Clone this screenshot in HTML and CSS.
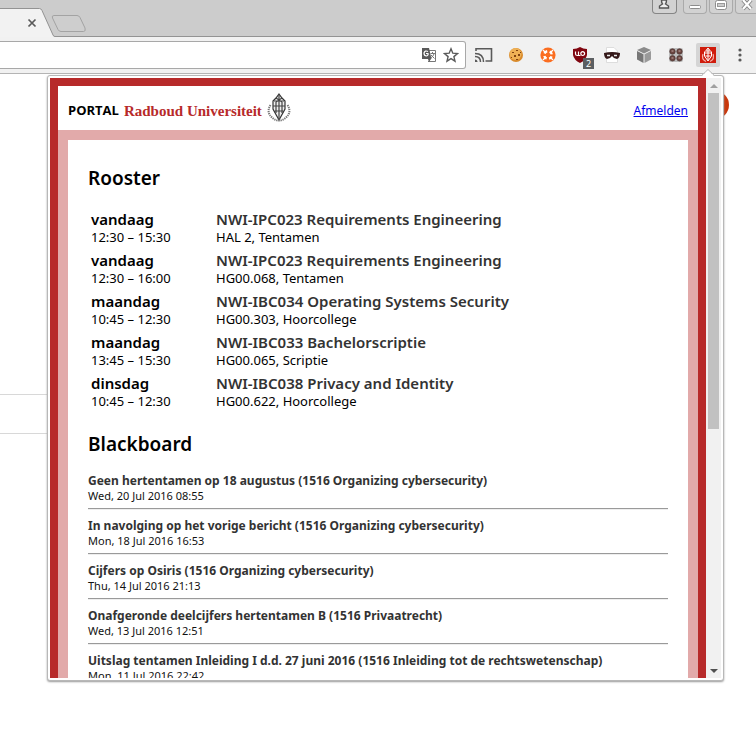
FILE: index.html
```html
<!DOCTYPE html>
<html lang="nl">
<head>
<meta charset="utf-8">
<title>Portal Radboud Universiteit</title>
<link rel="stylesheet" href="styles.css">
</head>
<body>
<header class="browser">
  <div class="tabstrip">
    <svg class="tabs" width="90" height="37" viewBox="0 0 90 37" aria-hidden="true">
      <path d="M0 8.500H39.500Q41 8.500 42 10.500L53 35Q53.500 36.500 55 36.500V37H0Z" fill="#f2f2f2"/>
      <path d="M0 8.500H39.500Q41 8.500 42 10.500L53 35Q53.500 36.500 55 36.500H90" fill="none" stroke="#939393"/>
      <path d="M28.500 19.500L35.500 26.500M35.500 19.500L28.500 26.500" stroke="#5a5a5a" stroke-width="1.700"/>
      <path d="M54 15.500H77Q79 15.500 80 17.500L85 28Q86 31.500 83.500 31.500H61Q59 31.500 58 29.500L52.500 18Q51.500 15.500 54 15.500Z" fill="#cecece" stroke="#a3a3a3"/>
    </svg>
    <div class="window-buttons">
      <button class="win account" aria-label="Account"><svg width="22" height="13" viewBox="0 0 22 13"><path d="M6.500 8V6L9.500 4Q8.500 3 8.500 0H13.500Q13.500 3 12.500 4L15.500 6V8Z" fill="#eee" stroke="#555" stroke-width="1.400"/></svg></button>
      <button class="win" aria-label="Minimaliseren"><svg width="22" height="13" viewBox="0 0 22 13"><rect x="5.500" y="5.500" width="11" height="3" rx="1" fill="#fff" stroke="#8d8d8d"/></svg></button>
      <button class="win" aria-label="Maximaliseren"><svg width="22" height="13" viewBox="0 0 22 13"><rect x="5.500" y="0.500" width="11" height="9" rx="2" fill="#fff" stroke="#8d8d8d"/><rect x="7.500" y="3.500" width="7" height="3" fill="#ccc" stroke="#999"/></svg></button>
      <button class="win" aria-label="Sluiten"><svg width="22" height="13" viewBox="0 0 22 13"><path d="M7 0L15 9M15 0L7 9" stroke="#858585" stroke-width="4"/><path d="M7 0L15 9M15 0L7 9" stroke="#fff" stroke-width="2.200"/></svg></button>
    </div>
  </div>
  <div class="toolbar">
    <div class="address">
      <svg width="16" height="16" viewBox="0 0 16 16" aria-hidden="true"><path d="M7 3.500H14.500V14.500H7" fill="#fff" stroke="#777"/><path d="M1 1H8L10.500 12H1Z" fill="#5a5a5a"/><path d="M7 4.500Q4 3 3 6Q3 9 5.500 9Q7.500 8.500 7 6.500H5" fill="none" stroke="#fff" stroke-width="1.200"/><path d="M9.500 6.500H14M11.500 5V7M13 7Q12 10 9.500 11M10 8L13.500 11.500" fill="none" stroke="#777"/><path d="M7 12H10L8 15Z" fill="#5a5a5a"/></svg>
      <svg width="16" height="16" viewBox="0 0 16 16" aria-hidden="true"><path d="M8 1.800L9.800 6.200L14.500 6.500L10.900 9.600L12 14.200L8 11.700L4 14.200L5.100 9.600L1.500 6.500L6.200 6.200Z" fill="none" stroke="#5a5a5a" stroke-width="1.400"/></svg>
    </div>
    <div class="extensions">
      <button class="ext" aria-label="Casten"><svg width="18" height="16" viewBox="0 0 18 16"><path d="M1 4V1.700H16.500V14H10.500" fill="none" stroke="#5a5a5a" stroke-width="1.600"/><path d="M0 12.500A2.500 2.500 0 0 1 2.500 15H0Z" fill="#5a5a5a"/><path d="M0 9.500Q5.500 9.500 5.500 15M0 6.500Q8.500 6.500 8.500 15" fill="none" stroke="#5a5a5a" stroke-width="1.500"/></svg></button>
      <button class="ext" aria-label="Cookies"><svg width="16" height="16" viewBox="0 0 16 16"><circle cx="8" cy="8" r="7" fill="#d98a2b"/><circle cx="7.500" cy="7" r="6" fill="#eeb055"/><path d="M4 5h2v1H4zM8 3h2v1H8zM10 7h2v2h-2zM6 8h2v2H6zM3 10h1v1H3zM8 12h2v1H8zM12 5h1v1h-1z" fill="#814311"/></svg></button>
      <button class="ext" aria-label="Hulp"><svg width="16" height="16" viewBox="0 0 16 16"><circle cx="8" cy="8" r="7.600" fill="#fb6d20"/><circle cx="8" cy="8" r="3.800" fill="none" stroke="#fff" stroke-width="2.400" stroke-dasharray="3.400 2.570" transform="rotate(20 8 8)"/><path d="M3 3L5 5M13 3L11 5M3 13L5 11M13 13L11 11" stroke="#fff" stroke-width="1.300"/></svg></button>
      <button class="ext" aria-label="uBlock"><svg class="shield" width="16" height="18" viewBox="0 0 16 18"><path d="M1 3Q5 3 8 1Q11 3 15 3V9Q14 14 8 17Q2 14 1 9Z" fill="#800610"/><path d="M3.500 5.500V8Q3.500 9.500 5.500 9.500H6.500V5.500M6.500 9.500H8.500M10.700 5.700A1.900 1.900 0 1 1 10.700 9.500A1.900 1.900 0 1 1 10.700 5.700" fill="none" stroke="#fff" stroke-width="1.200"/></svg><span class="count">2</span></button>
      <button class="ext" aria-label="Masker"><svg width="16" height="16" viewBox="0 0 16 16"><path d="M2.500 0.500H10L13.500 4V15.500H2.500Z" fill="#fff" stroke="#ddd"/><path d="M0 6Q8 4 16 6Q16 11 13 12Q10 12 8 9Q6 12 3 12Q0 11 0 6Z" fill="#35191a"/><path d="M3 8.500H6M10 8.500H13" stroke="#eee" stroke-width="1.600"/></svg></button>
      <button class="ext" aria-label="Kubus"><svg width="16" height="16" viewBox="0 0 16 16"><path d="M8 0L15 3L8 6.500L1 3Z" fill="#8b8b8b"/><path d="M1 4L7.500 7.200V16L1 12.500Z" fill="#777"/><path d="M15 4L8.500 7.200V16L15 12.500Z" fill="#9a9a9a"/></svg></button>
      <button class="ext" aria-label="Knoppen"><svg width="16" height="16" viewBox="0 0 16 16"><rect x="1" y="1" width="14" height="14" rx="2" fill="#bdbdbd"/><g fill="#6b4540" stroke="#4b3532" stroke-width="0.700"><circle cx="4.500" cy="4.500" r="2.700"/><circle cx="11.500" cy="4.500" r="2.700"/><circle cx="4.500" cy="11.300" r="2.700"/><circle cx="11.500" cy="11.300" r="2.700"/></g><path d="M3.500 4h2M10.500 4h2M3.500 11h2M10.500 11h2" stroke="#c5aaa5"/></svg></button>
      <button class="ext active" aria-label="Portal"><svg width="16" height="16" viewBox="0 0 16 16"><rect width="16" height="16" fill="#d01c0c"/><path d="M8 1L10 3.500L11.500 5V9L8 14L4.500 9V5L6 3.500ZM8 2V13M5 6H11M6 4H10M5.500 9H10.500" fill="none" stroke="#fff" stroke-width="1"/><path d="M3 7Q1 12 6 14.500M13 7Q15 12 10 14.500" fill="none" stroke="#f4b1aa" stroke-width="1.200"/></svg></button>
      <button class="ext menu" aria-label="Menu"><svg width="4" height="16" viewBox="0 0 4 16"><g fill="#5a5a5a"><circle cx="2" cy="3" r="1.600"/><circle cx="2" cy="8" r="1.600"/><circle cx="2" cy="13" r="1.600"/></g></svg></button>
    </div>
  </div>
</header>
<div class="page-band"></div>
<div class="page-dot"></div>

<section class="popup">
  <svg class="pointer" width="16" height="8" viewBox="0 0 16 8" aria-hidden="true"><path d="M1 8L8 1L15 8Z" fill="#fff"/><path d="M1 7L8 0.500L15 7" fill="none" stroke="#bbb"/></svg>
  <div class="viewport">
    <div class="portal">
      <div class="brandbar">
        <div class="brand">
          <span class="portal-word">PORTAL</span>
          <span class="university">Radboud Universiteit</span>
          <svg width="24" height="30" viewBox="0 0 24 30" aria-hidden="true"><path d="M12 1L15 5L18 8V16L12 27L6 16V8L9 5Z" fill="#eee" stroke="#333" stroke-width="1.200"/><path d="M12 1V27M7 8H17M6 13H18M8 18H16M9 5L15 9M15 5L9 9M9 9V20M15 9V20" fill="none" stroke="#444" stroke-width="1.200"/><path d="M3.500 12Q-1 19 5 24.500Q8 27.500 12 27.500Q16 27.500 19 24.500Q25 19 20.500 12" fill="none" stroke="#777" stroke-width="2" stroke-dasharray="1.300 0.800"/></svg>
        </div>
        <a class="logout" href="#">Afmelden</a>
      </div>
      <main class="content">
        <h2>Rooster</h2>
        <table class="schedule">
          <tr><td><strong>vandaag</strong>12:30 – 15:30</td><td><a href="#">NWI-IPC023 Requirements Engineering</a>HAL 2, Tentamen</td></tr>
          <tr><td><strong>vandaag</strong>12:30 – 16:00</td><td><a href="#">NWI-IPC023 Requirements Engineering</a>HG00.068, Tentamen</td></tr>
          <tr><td><strong>maandag</strong>10:45 – 12:30</td><td><a href="#">NWI-IBC034 Operating Systems Security</a>HG00.303, Hoorcollege</td></tr>
          <tr><td><strong>maandag</strong>13:45 – 15:30</td><td><a href="#">NWI-IBC033 Bachelorscriptie</a>HG00.065, Scriptie</td></tr>
          <tr><td><strong>dinsdag</strong>10:45 – 12:30</td><td><a href="#">NWI-IBC038 Privacy and Identity</a>HG00.622, Hoorcollege</td></tr>
        </table>
        <h2>Blackboard</h2>
        <ul class="news">
          <li><a href="#">Geen hertentamen op 18 augustus (1516 Organizing cybersecurity)</a><time>Wed, 20 Jul 2016 08:55</time></li>
          <li><a href="#">In navolging op het vorige bericht (1516 Organizing cybersecurity)</a><time>Mon, 18 Jul 2016 16:53</time></li>
          <li><a href="#">Cijfers op Osiris (1516 Organizing cybersecurity)</a><time>Thu, 14 Jul 2016 21:13</time></li>
          <li><a href="#">Onafgeronde deelcijfers hertentamen B (1516 Privaatrecht)</a><time>Wed, 13 Jul 2016 12:51</time></li>
          <li><a href="#">Uitslag tentamen Inleiding I d.d. 27 juni 2016 (1516 Inleiding tot de rechtswetenschap)</a><time>Mon, 11 Jul 2016 22:42</time></li>
        </ul>
      </main>
    </div>
    <div class="scrollbar" aria-hidden="true">
      <span class="arrow up"></span>
      <span class="track"><span class="thumb"></span></span>
      <span class="arrow down"></span>
    </div>
  </div>
</section>
</body>
</html>
```
FILE: styles.css
```css
* { box-sizing: border-box; }

body {
  margin: 0;
  min-height: 100vh;
  position: relative;
  overflow: hidden;
  background: #fff;
  color: #000;
  font-family: "Noto Sans", "Open Sans", sans-serif;
}

button { padding: 0; border: 0; background: none; font: inherit; }
svg { display: block; }

/* Browser chrome */
.tabstrip {
  display: flex;
  justify-content: space-between;
  align-items: flex-start;
  height: 37px;
  background: #ccc;
  border-bottom: 1px solid #939393;
}
.tabs { flex: none; }
.window-buttons { display: flex; gap: 2px; margin-right: -3px; }
.win {
  width: 24px;
  height: 14px;
  border: 1px solid #aaa;
  border-top: 0;
  border-radius: 0 0 4px 4px;
  background: #d2d2d2;
}
.account { width: 25px; margin-right: 4px; border-color: #858585; }
.toolbar {
  display: flex;
  align-items: center;
  height: 37px;
  background: #f1f1f1;
  border-bottom: 1px solid #b4b4b4;
}
.address {
  flex: 1;
  display: flex;
  justify-content: flex-end;
  align-items: center;
  gap: 6px;
  height: 28px;
  padding-right: 6px;
  background: #fff;
  border: 1px solid #a8a8a8;
  border-left: 0;
  border-radius: 0 3px 3px 0;
}
.extensions { display: flex; align-items: center; gap: 8px; padding: 0 4px 0 6px; }
.ext {
  position: relative;
  display: flex;
  justify-content: center;
  align-items: center;
  width: 24px;
  height: 24px;
  border-radius: 2px;
}
.active { background: #d5d5d5; }
.count {
  position: absolute;
  right: -2px;
  bottom: -2px;
  width: 11px;
  height: 11px;
  background: #5c5f62;
  color: #fff;
  font-size: 9px;
  line-height: 11px;
}

/* Page behind the popup */
.page-band {
  height: 40px;
  margin-top: 320px;
  border: solid #d8d8d8;
  border-width: 1px 0;
  width: 50%;
}
.page-dot {
  position: absolute;
  top: 91px;
  right: 27px;
  width: 28px;
  height: 28px;
  border-radius: 50%;
  background: #c9370b;
}

/* Extension popup */
.popup {
  position: absolute;
  inset: 75px 32px 53px 47px;
  padding: 2px 2px 2px 2px;
  border: 1px solid #b8b8b8;
  border-radius: 3px;
  background: #fff;
  box-shadow: 0 1px 2px #999;
}
.pointer { position: absolute; right: 7px; top: -7px; }
.viewport { display: flex; height: 100%; overflow: hidden; }
.portal {
  flex: 1;
  min-width: 0;
  min-height: 720px;
  border: 8px solid #b72a2a;
}
.brandbar {
  display: flex;
  justify-content: space-between;
  align-items: center;
  height: 44px;
  padding: 0 10px;
}
.brand { display: flex; align-items: center; gap: 5px; }
.portal-word { padding-top: 4px; font: 700 13px/20px "Open Sans", sans-serif; }
.university {
  padding-top: 5px;
  color: #b72a2a;
  font: 700 15px/20px "Liberation Serif", serif;
}
.logout { padding-top: 6px; color: #00e; font-size: 12px; line-height: 20px; }
.content {
  min-height: 700px;
  padding: 26px 20px;
  border: 10px solid #e2aaaa;
}
h2 { margin: 0; font-size: 19px; line-height: 24px; font-weight: 600; }
.schedule { margin: 19px 0 18px 3px; border-collapse: collapse; }
.schedule td {
  padding: 0 0 4px;
  font-size: 13px;
  line-height: 17px;
  vertical-align: top;
}
.schedule td:first-child { width: 125px; }
.schedule strong,
.schedule a {
  display: block;
  font-size: 15px;
  line-height: 20px;
  font-weight: 600;
}
.schedule a, .news a { color: #333; text-decoration: none; }
.news { margin: 16px 0 0; padding: 0; list-style: none; }
.news li {
  margin-bottom: 7px;
  padding-bottom: 6px;
  border-bottom: 2px groove #eee;
  white-space: nowrap;
}
.news a { display: block; font-size: 12px; line-height: 18px; font-weight: 700; }
.news time { display: block; font-size: 11px; line-height: 12px; color: #111; }

/* Scrollbar */
.scrollbar {
  display: flex;
  flex-direction: column;
  width: 15px;
  background: #f1f1f1;
}
.arrow { display: grid; place-items: center; height: 15px; }
.arrow::before { content: ""; border: 4px solid transparent; }
.up::before { border-top: 0; border-bottom-color: #a0a0a0; }
.down::before { border-bottom: 0; border-top-color: #505050; }
.track { flex: 1; padding: 0 2px; }
.thumb { display: block; height: 59%; background: #c1c1c1; }
```
